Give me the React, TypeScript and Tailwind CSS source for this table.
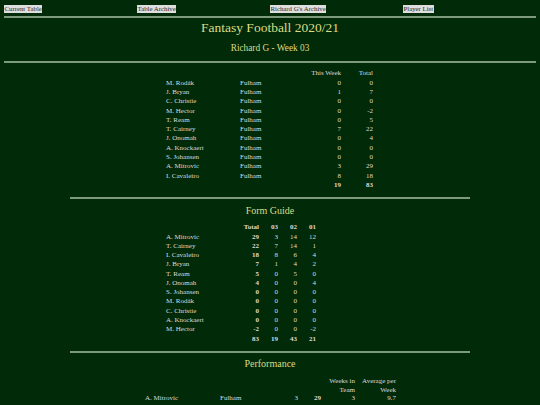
import React from "react";

const squad: [string, string, string, string][] = [
  ["M. Rodák", "Fulham", "0", "0"],
  ["J. Bryan", "Fulham", "1", "7"],
  ["C. Christie", "Fulham", "0", "0"],
  ["M. Hector", "Fulham", "0", "-2"],
  ["T. Ream", "Fulham", "0", "5"],
  ["T. Cairney", "Fulham", "7", "22"],
  ["J. Onomah", "Fulham", "0", "4"],
  ["A. Knockaert", "Fulham", "0", "0"],
  ["S. Johansen", "Fulham", "0", "0"],
  ["A. Mitrovic", "Fulham", "3", "29"],
  ["I. Cavaleiro", "Fulham", "8", "18"],
];

const form: [string, string, string, string, string][] = [
  ["A. Mitrovic", "29", "3", "14", "12"],
  ["T. Cairney", "22", "7", "14", "1"],
  ["I. Cavaleiro", "18", "8", "6", "4"],
  ["J. Bryan", "7", "1", "4", "2"],
  ["T. Ream", "5", "0", "5", "0"],
  ["J. Onomah", "4", "0", "0", "4"],
  ["S. Johansen", "0", "0", "0", "0"],
  ["M. Rodák", "0", "0", "0", "0"],
  ["C. Christie", "0", "0", "0", "0"],
  ["A. Knockaert", "0", "0", "0", "0"],
  ["M. Hector", "-2", "0", "0", "-2"],
];

const nav = ["Current Table", "Table Archive", "Richard G's Archive", "Player List"];

export default function App() {
  return (
    <div className="min-h-[405px] w-[540px] overflow-hidden bg-[#012a09] px-[4px] font-['Liberation_Serif','Times_New_Roman',serif] text-[#dcdcdc] antialiased">
      {/* nav */}
      <div className="grid h-[16px] grid-cols-4 overflow-hidden pt-[5px] text-[6.8px] leading-[7.5px]">
        {nav.map((n) => (
          <div key={n} className="h-[7.5px] leading-[7.5px]">
            <span className="inline-block bg-[#dedede] px-[0.5px] align-top text-[#2a2a2a]">{n}</span>
          </div>
        ))}
      </div>
      <div className="h-[2px] bg-[#7d9a7d]" />
      <div className="mt-[2px] h-[16px] text-center text-[13.5px] leading-[16px] text-[#dcdc84]">Fantasy Football 2020/21</div>
      <div className="mt-[6px] h-[12px] text-center text-[9.3px] leading-[12px] text-[#dcdc84]">Richard G - Week 03</div>
      <div className="mt-[7px] h-[2px] bg-[#7d9a7d]" />

      {/* squad table */}
      <div className="ml-[162px] mt-[6.4px] text-[7px] leading-[9.3px]">
        <div className="grid grid-cols-[74px_61px_40px_32px]">
          <div />
          <div />
          <div className="text-right">This Week</div>
          <div className="text-right">Total</div>
        </div>
        {squad.map((r) => (
          <div key={r[0]} className="grid grid-cols-[74px_61px_40px_32px]">
            <div>{r[0]}</div>
            <div>{r[1]}</div>
            <div className="text-right">{r[2]}</div>
            <div className="text-right">{r[3]}</div>
          </div>
        ))}
        <div className="grid grid-cols-[74px_61px_40px_32px] font-bold">
          <div />
          <div />
          <div className="text-right">19</div>
          <div className="text-right">83</div>
        </div>
      </div>

      <div className="mx-[66px] mt-[6.7px] h-[2px] bg-[#7d9a7d]" />
      <div className="mt-[5.7px] h-[12px] text-center text-[10px] leading-[12px] text-[#dcdc84]">Form Guide</div>

      {/* form guide */}
      <div className="ml-[162px] mt-[6.7px] text-[7px] leading-[9.27px]">
        <div className="grid grid-cols-[63px_30px_19px_19px_19px] font-bold">
          <div />
          <div className="text-right">Total</div>
          <div className="text-right">03</div>
          <div className="text-right">02</div>
          <div className="text-right">01</div>
        </div>
        {form.map((r) => (
          <div key={r[0]} className="grid grid-cols-[63px_30px_19px_19px_19px]">
            <div>{r[0]}</div>
            <div className="text-right font-bold">{r[1]}</div>
            <div className="text-right">{r[2]}</div>
            <div className="text-right">{r[3]}</div>
            <div className="text-right">{r[4]}</div>
          </div>
        ))}
        <div className="grid grid-cols-[63px_30px_19px_19px_19px] font-bold">
          <div />
          <div className="text-right">83</div>
          <div className="text-right">19</div>
          <div className="text-right">43</div>
          <div className="text-right">21</div>
        </div>
      </div>

      <div className="mx-[66px] mt-[6.8px] h-[2px] bg-[#7d9a7d]" />
      <div className="mt-[5.6px] h-[12px] text-center text-[10px] leading-[12px] text-[#dcdc84]">Performance</div>

      {/* performance */}
      <div className="ml-[141px] mt-[6.7px] text-[7px]">
        <div className="grid grid-cols-[75px_50px_28px_23px_34px_41px] leading-[8.7px]">
          <div />
          <div />
          <div />
          <div />
          <div className="text-right">Weeks in<br />Team</div>
          <div className="text-right">Average per<br />Week</div>
        </div>
        <div className="grid grid-cols-[75px_50px_28px_23px_34px_41px] leading-[9.27px]">
          <div>A. Mitrovic</div>
          <div>Fulham</div>
          <div className="text-right">3</div>
          <div className="text-right font-bold">29</div>
          <div className="text-right">3</div>
          <div className="text-right">9.7</div>
        </div>
      </div>
    </div>
  );
}
